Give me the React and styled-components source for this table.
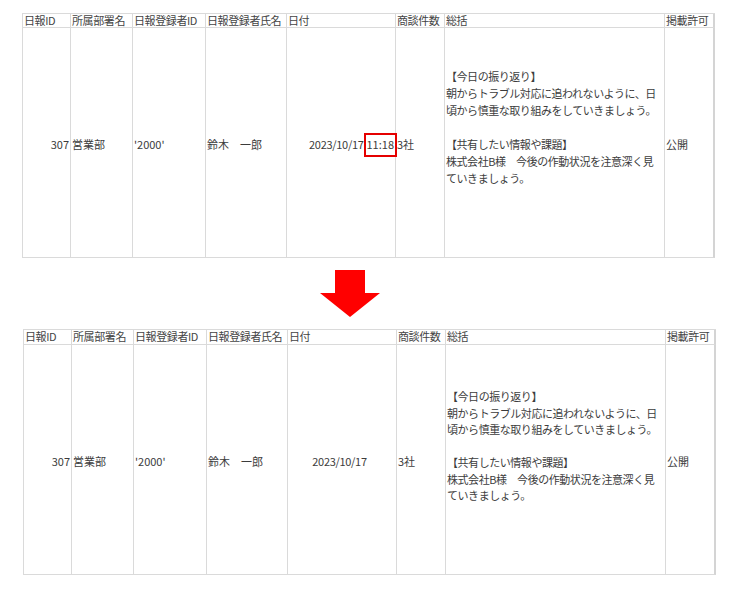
import React from 'react';
import styled, { createGlobalStyle } from 'styled-components';

const GlobalStyle = createGlobalStyle`
  html, body {
    margin: 0;
    padding: 0;
    background: #fff;
  }
  body {
    font-family: "Noto Sans CJK JP", "Noto Sans", sans-serif;
    color: #3c3c3c;
  }
`;

const Page = styled.div({
  width: '732px',
  height: '590px',
  paddingTop: '13px',
  paddingLeft: '22px',
  boxSizing: 'border-box',
  display: 'flex',
  flexDirection: 'column'
});

const Sheet = styled.div({
  display: 'grid',
  gridTemplateColumns: '48px 62px 73px 81px 109px 49px 220px 50px',
  gridTemplateRows: props => `${props.$head}px 230px`,
  width: 'max-content',
  marginLeft: props => `${props.$shift || 0}px`,
  borderTop: '1px solid #dadada',
  borderLeft: '1px solid #dadada'
});

const Cell = styled.div({
  boxSizing: 'border-box',
  borderRight: '1px solid #dadada',
  borderBottom: '1px solid #dadada',
  fontSize: '11px',
  lineHeight: '13px',
  padding: props => `3px ${props.$pr || 1}px 0 1px`,
  whiteSpace: 'nowrap',
  display: 'flex',
  alignItems: 'center',
  justifyContent: props =>
    props.$align === 'right'
      ? 'flex-end'
      : props.$align === 'center'
      ? 'center'
      : 'flex-start',
  '&:nth-child(8n)': {
    borderRight: '2px solid #d4d4d4'
  }
});

const Head = styled(Cell)({
  alignItems: 'flex-start',
  paddingTop: 0,
  letterSpacing: '-0.4px',
  color: '#444'
});

const Summary = styled(Cell)({
  display: 'block',
  alignSelf: 'stretch',
  paddingLeft: '1px',
  paddingTop: props => `${props.$top}px`,
  lineHeight: props => `${props.$lh}px`,
  letterSpacing: '-0.45px',
  whiteSpace: 'pre'
});

const DateText = styled.span({
  letterSpacing: '-0.3px'
});

const Time = styled.span({
  position: 'relative',
  marginLeft: '3px',
  '&::after': {
    content: '""',
    position: 'absolute',
    left: '-3px',
    right: '-3px',
    top: '-5px',
    bottom: '-6px',
    border: '2px solid #e50000'
  }
});

const ArrowRow = styled.div({
  height: '71px',
  display: 'flex',
  alignItems: 'center',
  paddingLeft: '298px'
});

const heads = [
  '日報ID',
  '所属部署名',
  '日報登録者ID',
  '日報登録者氏名',
  '日付',
  '商談件数',
  '総括',
  '掲載許可'
];

const summaryText =
  '【今日の振り返り】\n朝からトラブル対応に追われないように、日\n頃から慎重な取り組みをしていきましょう。\n\n【共有したい情報や課題】\n株式会社B様　今後の作動状況を注意深く見\nていきましょう。';

const Report = ({ head, shift, withTime, summaryTop, lineHeight }) => (
  <Sheet $head={head} $shift={shift}>
    {heads.map(h => (
      <Head key={h}>{h}</Head>
    ))}
    <Cell $align="right">307</Cell>
    <Cell>営業部</Cell>
    <Cell>'2000'</Cell>
    <Cell>鈴木　一郎</Cell>
    {withTime ? (
      <Cell $align="right">
        <DateText>2023/10/17</DateText>
        <Time>11:18</Time>
      </Cell>
    ) : (
      <Cell $align="center" $pr={6}>
        <DateText>2023/10/17</DateText>
      </Cell>
    )}
    <Cell>3社</Cell>
    <Summary $top={summaryTop} $lh={lineHeight}>
      {summaryText}
    </Summary>
    <Cell>公開</Cell>
  </Sheet>
);

const Arrow = () => (
  <svg width="60" height="47" viewBox="0 0 60 47">
    <polygon points="15,0 45,0 45,23 60,23 30,47 0,23 15,23" fill="#ff0000" />
  </svg>
);

const App = () => (
  <Page>
    <GlobalStyle />
    <Report head={14} withTime summaryTop={40} lineHeight={17} />
    <ArrowRow>
      <Arrow />
    </ArrowRow>
    <Report head={15} shift={1} summaryTop={43} lineHeight={16.5} />
  </Page>
);

export default App;
